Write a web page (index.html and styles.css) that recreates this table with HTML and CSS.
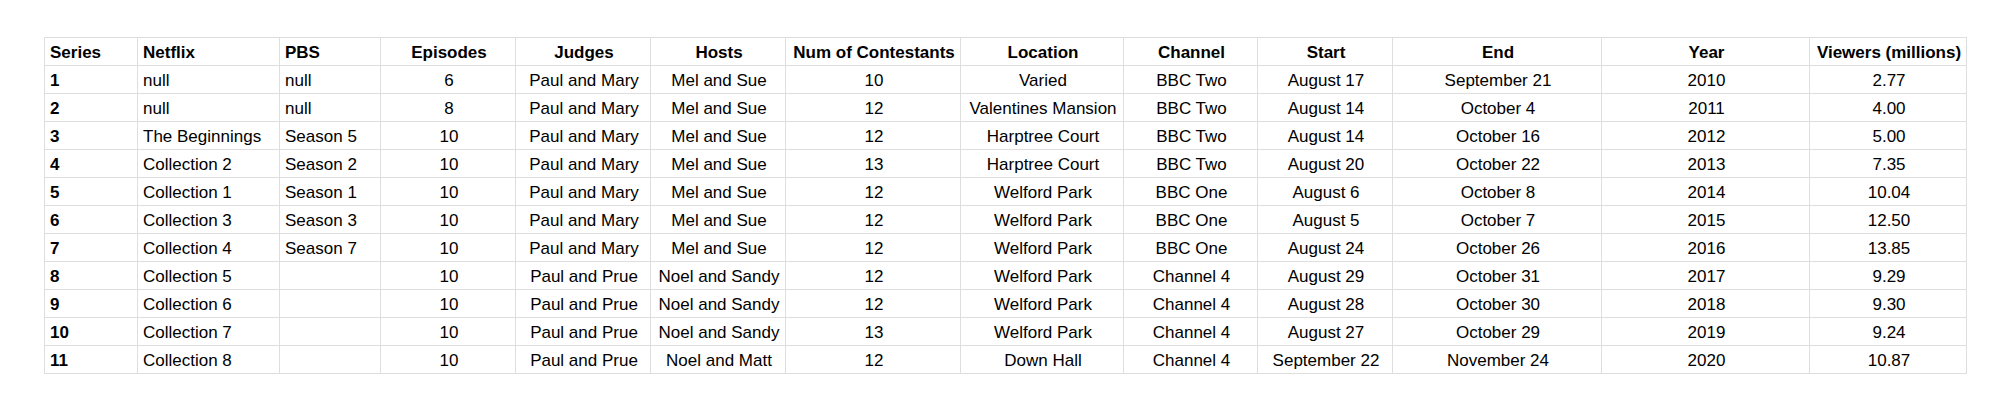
FILE: index.html
```html
<!DOCTYPE html>
<html lang="en">
<head>
<meta charset="utf-8">
<title>Great British Bake Off Series</title>
<link rel="stylesheet" href="styles.css">
</head>
<body>
<main class="page">
<table class="grid">
<colgroup>
<col class="c-series"><col class="c-netflix"><col class="c-pbs"><col class="c-episodes"><col class="c-judges"><col class="c-hosts"><col class="c-num"><col class="c-location"><col class="c-channel"><col class="c-start"><col class="c-end"><col class="c-year"><col class="c-viewers">
</colgroup>
<thead>
<tr><th class="l">Series</th><th class="l">Netflix</th><th class="l">PBS</th><th>Episodes</th><th>Judges</th><th>Hosts</th><th>Num of Contestants</th><th>Location</th><th>Channel</th><th>Start</th><th>End</th><th>Year</th><th>Viewers (millions)</th></tr>
</thead>
<tbody>
<tr><td class="l b">1</td><td class="l">null</td><td class="l">null</td><td>6</td><td>Paul and Mary</td><td>Mel and Sue</td><td>10</td><td>Varied</td><td>BBC Two</td><td>August 17</td><td>September 21</td><td>2010</td><td>2.77</td></tr>
<tr><td class="l b">2</td><td class="l">null</td><td class="l">null</td><td>8</td><td>Paul and Mary</td><td>Mel and Sue</td><td>12</td><td>Valentines Mansion</td><td>BBC Two</td><td>August 14</td><td>October 4</td><td>2011</td><td>4.00</td></tr>
<tr><td class="l b">3</td><td class="l">The Beginnings</td><td class="l">Season 5</td><td>10</td><td>Paul and Mary</td><td>Mel and Sue</td><td>12</td><td>Harptree Court</td><td>BBC Two</td><td>August 14</td><td>October 16</td><td>2012</td><td>5.00</td></tr>
<tr><td class="l b">4</td><td class="l">Collection 2</td><td class="l">Season 2</td><td>10</td><td>Paul and Mary</td><td>Mel and Sue</td><td>13</td><td>Harptree Court</td><td>BBC Two</td><td>August 20</td><td>October 22</td><td>2013</td><td>7.35</td></tr>
<tr><td class="l b">5</td><td class="l">Collection 1</td><td class="l">Season 1</td><td>10</td><td>Paul and Mary</td><td>Mel and Sue</td><td>12</td><td>Welford Park</td><td>BBC One</td><td>August 6</td><td>October 8</td><td>2014</td><td>10.04</td></tr>
<tr><td class="l b">6</td><td class="l">Collection 3</td><td class="l">Season 3</td><td>10</td><td>Paul and Mary</td><td>Mel and Sue</td><td>12</td><td>Welford Park</td><td>BBC One</td><td>August 5</td><td>October 7</td><td>2015</td><td>12.50</td></tr>
<tr><td class="l b">7</td><td class="l">Collection 4</td><td class="l">Season 7</td><td>10</td><td>Paul and Mary</td><td>Mel and Sue</td><td>12</td><td>Welford Park</td><td>BBC One</td><td>August 24</td><td>October 26</td><td>2016</td><td>13.85</td></tr>
<tr><td class="l b">8</td><td class="l">Collection 5</td><td class="l"></td><td>10</td><td>Paul and Prue</td><td>Noel and Sandy</td><td>12</td><td>Welford Park</td><td>Channel 4</td><td>August 29</td><td>October 31</td><td>2017</td><td>9.29</td></tr>
<tr><td class="l b">9</td><td class="l">Collection 6</td><td class="l"></td><td>10</td><td>Paul and Prue</td><td>Noel and Sandy</td><td>12</td><td>Welford Park</td><td>Channel 4</td><td>August 28</td><td>October 30</td><td>2018</td><td>9.30</td></tr>
<tr><td class="l b">10</td><td class="l">Collection 7</td><td class="l"></td><td>10</td><td>Paul and Prue</td><td>Noel and Sandy</td><td>13</td><td>Welford Park</td><td>Channel 4</td><td>August 27</td><td>October 29</td><td>2019</td><td>9.24</td></tr>
<tr><td class="l b">11</td><td class="l">Collection 8</td><td class="l"></td><td>10</td><td>Paul and Prue</td><td>Noel and Matt</td><td>12</td><td>Down Hall</td><td>Channel 4</td><td>September 22</td><td>November 24</td><td>2020</td><td>10.87</td></tr>
</tbody>
</table>
</main>
</body>
</html>
```

FILE: styles.css
```css
html, body {
  margin: 0;
  padding: 0;
  background: #ffffff;
}

.page {
  padding: 37px 37px 0 44px;
  font-family: "Liberation Sans", Arial, sans-serif;
  font-size: 17px;
  color: #000000;
}

.grid {
  border-collapse: collapse;
  table-layout: fixed;
  width: 1922px;
}

.c-series { width: 93px; }
.c-netflix { width: 142px; }
.c-pbs { width: 101px; }
.c-episodes { width: 135px; }
.c-judges { width: 135px; }
.c-hosts { width: 135px; }
.c-num { width: 175px; }
.c-location { width: 163px; }
.c-channel { width: 134px; }
.c-start { width: 135px; }
.c-end { width: 209px; }
.c-year { width: 208px; }
.c-viewers { width: 157px; }

.grid th,
.grid td {
  border: 1px solid #dedede;
  padding: 4px 3px 2px 5px;
  line-height: 21px;
  height: 21px;
  text-align: center;
  white-space: nowrap;
  font-weight: normal;
}

.grid th {
  font-weight: bold;
}

.grid .l {
  text-align: left;
}

.grid .b {
  font-weight: bold;
}
```
